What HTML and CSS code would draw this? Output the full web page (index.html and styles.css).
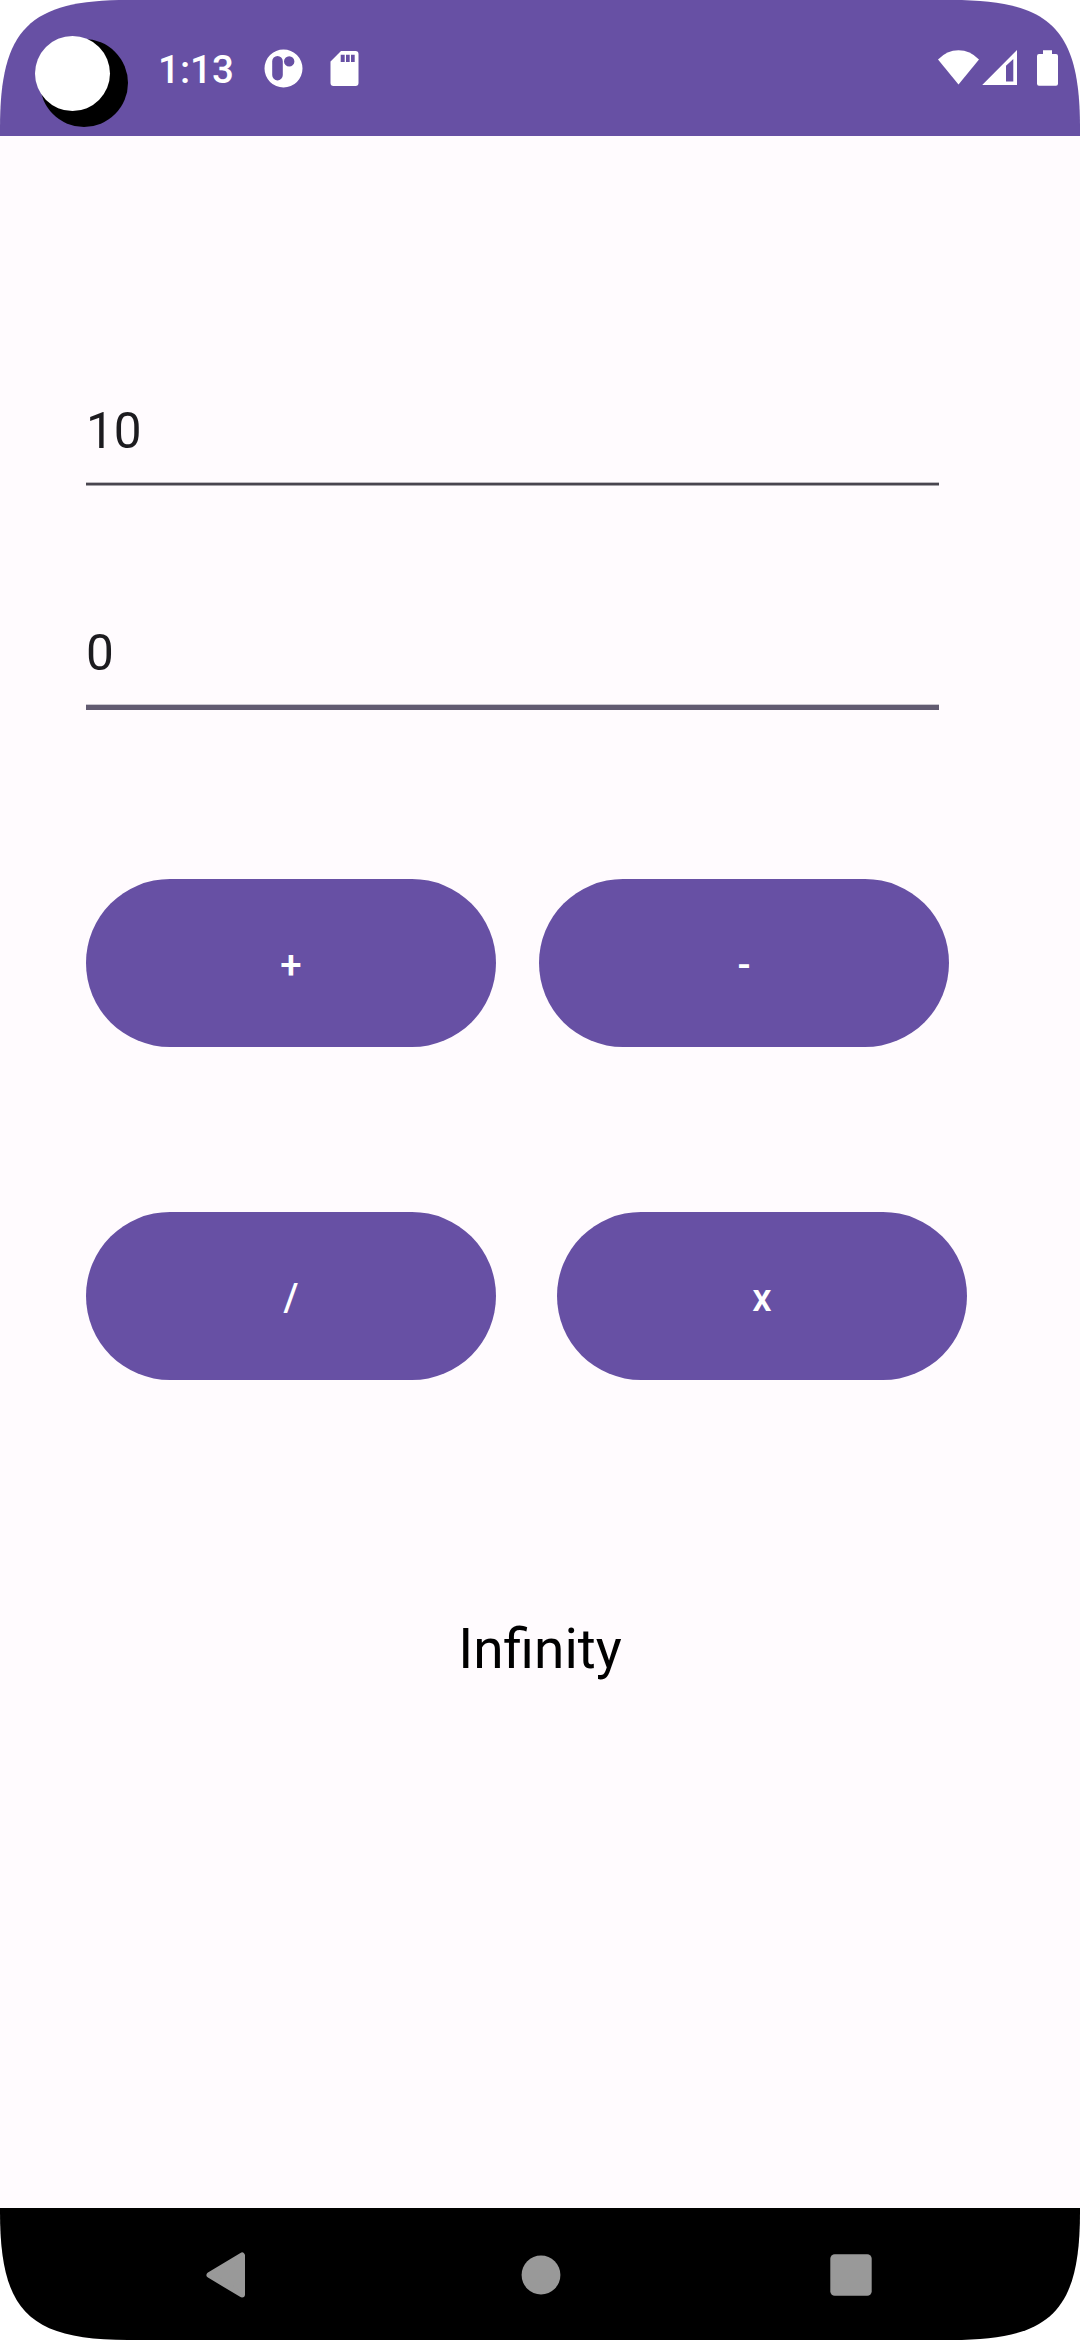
FILE: index.html
```html
<!DOCTYPE html>
<html lang="en">
<head>
<meta charset="utf-8">
<title>Calculator</title>
<link rel="stylesheet" href="styles.css">
</head>
<body>
<div class="phone">
  <header class="status-bar">
    <svg class="camera" width="93" height="91" viewBox="35 36 93 91">
      <circle cx="84" cy="83" r="44" fill="#000"/>
      <circle cx="72.5" cy="73.5" r="37.5" fill="#fff"/>
    </svg>
    <span class="time">1:13</span>
    <svg class="notifications" width="96" height="40" viewBox="264 48 96 40" fill="#fff">
      <path fill-rule="evenodd" d="M283.5 49.5a19 19 0 1 1 0 38a19 19 0 1 1 0-38zM277.5 56a5.3 5.3 0 0 0-5.3 5.3v13.8a5.3 5.3 0 0 0 10.6 0v-13.8a5.3 5.3 0 0 0-5.3-5.3zM289.2 56.2a5.2 5.2 0 1 0 0 10.4a5.2 5.2 0 1 0 0-10.4z"/>
      <path fill-rule="evenodd" d="M341 51h14.5a3 3 0 0 1 3 3v29a3 3 0 0 1-3 3h-22a3 3 0 0 1-3-3v-21.500zM340.700 54.700v7.300h4v-7.300zM346 54.700v7.300h3.700v-7.300zM351 54.700v7.300h3.700v-7.300z"/>
    </svg>
    <svg class="system-icons" width="122" height="38" viewBox="937 49 122 38" fill="#fff">
      <path d="M958.500 84.500L938 59.500Q947 50.300 958.500 50.300T979 59.500z"/>
      <path fill-rule="evenodd" d="M982.200 85L1017 50v35zM1006 65.800v15.600h7.300v-22.400z"/>
      <path d="M1043 50.300h9v3.700h4a2 2 0 0 1 2 2v27.800a2 2 0 0 1-2 2h-17a2 2 0 0 1-2-2v-27.800a2 2 0 0 1 2-2h4z"/>
    </svg>
  </header>
  <main class="content">
    <div class="field first"><span>10</span></div>
    <div class="field second"><span>0</span></div>
    <div class="row add-sub">
      <button class="key">+</button>
      <button class="key">-</button>
    </div>
    <div class="row div-mul">
      <button class="key">/</button>
      <button class="key">x</button>
    </div>
    <div class="result">Infinity</div>
  </main>
  <nav class="nav-bar">
    <svg class="nav-icon" width="48" height="48" viewBox="202 2250.500 48 48">
      <path d="M209.500 2274.500L242 2255v39z" fill="#999" stroke="#999" stroke-width="6" stroke-linejoin="round"/>
    </svg>
    <svg class="nav-icon home" width="48" height="48" viewBox="0 0 48 48"><circle cx="24" cy="24" r="19.400" fill="#999"/></svg>
    <svg class="nav-icon" width="48" height="48" viewBox="0 0 48 48"><rect x="3.300" y="3.300" width="41.400" height="41.400" rx="4.500" fill="#999"/></svg>
  </nav>
</div>
</body>
</html>
```
FILE: styles.css
```css
* {
  box-sizing: border-box;
}

body {
  margin: 0;
  background: #fff;
  font-family: Roboto, "Liberation Sans", sans-serif;
}

.phone {
  display: flex;
  flex-direction: column;
  width: 1080px;
  height: 2340px;
  background: #fffbfe;
  clip-path: path("M0 128C0 29 29 0 128 0H952C1051 0 1080 29 1080 128V2212C1080 2311 1051 2340 952 2340H128C29 2340 0 2311 0 2212Z");
}

.status-bar {
  display: flex;
  align-items: flex-start;
  height: 136px;
  padding: 36px 21px 0 35px;
  background: #6750a4;
}

.camera {
  flex: none;
}

.time {
  margin: 11px 0 0 30px;
  width: 106px;
  color: #fff;
  font-size: 38.5px;
  font-weight: 500;
  line-height: 46px;
}

.notifications {
  margin-top: 12px;
}

.system-icons {
  margin: 13px 0 0 auto;
}

.content {
  display: flex;
  flex-direction: column;
  flex: 1;
  padding-left: 86px;
}

.field {
  width: 853px;
  color: #1c1b1f;
  font-size: 49.5px;
  line-height: 60px;
}

.first {
  height: 105px;
  margin-top: 245px;
  padding-top: 20px;
  background: linear-gradient(#bdbabf 1px, #49454f 1px 3px, #a4a2a7 3px) bottom / 100% 4px no-repeat;
}

.second {
  height: 105px;
  margin-top: 119px;
  padding-top: 18px;
  background: linear-gradient(#cac6cf 1px, #625b71 1px) bottom / 100% 6px no-repeat;
}

.row {
  display: flex;
}

.add-sub {
  gap: 43px;
  margin-top: 169px;
}

.div-mul {
  gap: 61px;
  margin-top: 165px;
}

.key {
  width: 410px;
  height: 168px;
  padding: 4px 0 0;
  border: 0;
  border-radius: 84px;
  background: #6750a4;
  color: #fff;
  font: 500 38.5px/46px Roboto, "Liberation Sans", sans-serif;
}

.result {
  width: 908px;
  margin-top: 237px;
  color: #000;
  font-size: 55px;
  line-height: 64px;
  text-align: center;
}

.nav-bar {
  display: flex;
  align-items: center;
  justify-content: space-between;
  height: 132px;
  padding: 1px 205px 0 202px;
  background: #000;
}

.home {
  margin-left: 4px;
}
```
